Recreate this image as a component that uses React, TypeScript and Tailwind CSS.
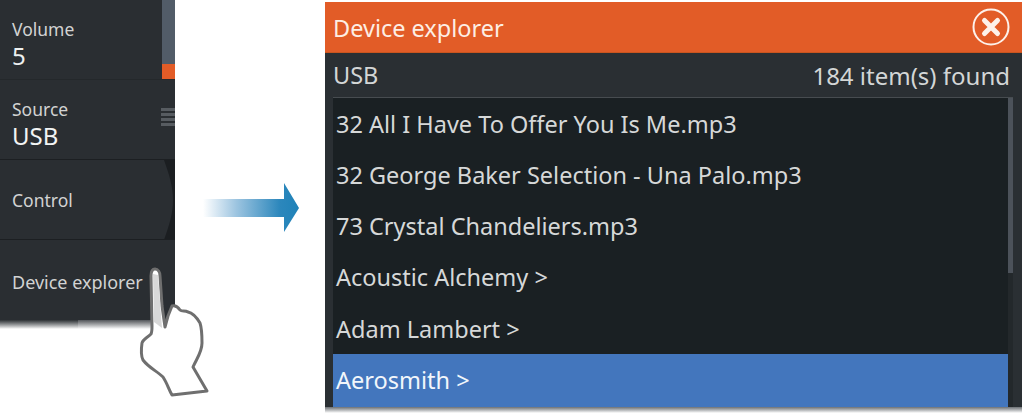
const font = { fontFamily: '"Noto Sans", sans-serif' };

const tracks = [
  { label: "32 All I Have To Offer You Is Me.mp3" },
  { label: "32 George Baker Selection - Una Palo.mp3" },
  { label: "73 Crystal Chandeliers.mp3" },
  { label: "Acoustic Alchemy >" },
  { label: "Adam Lambert >" },
];

function SideMenu() {
  return (
    <div className="relative w-[175px] h-[329px] shrink-0 bg-[#2a2e32]">
      <div className="flex h-[80px] border-b border-[#24282b]">
        <div className="flex-1 pl-3 pt-[18px]">
          <div className="text-[17.5px] leading-[22px] text-[#d2d3d3]">Volume</div>
          <div className="text-[24px] leading-[32px] text-[#eef0f0]">5</div>
        </div>
        <div className="w-[13px] flex flex-col">
          <div className="h-[64px] bg-[#525c68]" />
          <div className="h-[15px] bg-[#e25c27]" />
        </div>
      </div>
      <div className="flex h-[80px] border-b border-[#1c1f22]">
        <div className="flex-1 pl-3 pt-[18px]">
          <div className="text-[17.5px] leading-[22px] text-[#d2d3d3]">Source</div>
          <div className="text-[24px] leading-[32px] text-[#f2f4f4]">USB</div>
        </div>
        <div className="w-[14px] pt-[28px] flex flex-col gap-[2px]">
          <div className="h-[3px] bg-[#575c61]" />
          <div className="h-[3px] bg-[#575c61]" />
          <div className="h-[3px] bg-[#575c61]" />
          <div className="h-[3px] bg-[#575c61]" />
        </div>
      </div>
      <div className="relative flex h-[80px] items-center pl-3 pt-[2px] border-b border-[#1c1f22] overflow-hidden">
        <span className="text-[17.5px] text-[#d2d3d3]">Control</span>
        <svg className="absolute right-0 top-0" width="11" height="80" viewBox="0 0 11 80">
          <path d="M0 0 C5 14 9 26 9 40 C9 54 5 66 0 80 L11 80 L11 0 Z" fill="#1b1e21" />
        </svg>
      </div>
      <div className="flex h-[80px] items-center pl-3 pt-1">
        <span className="text-[18px] text-[#d2d3d3]">Device explorer</span>
      </div>
      <div className="absolute left-0 right-0 bottom-0 h-[9px] flex">
        <div className="w-[78px] bg-gradient-to-b from-[#2f3336] to-[#ffffff]" />
        <div className="flex-1 bg-gradient-to-b from-[#53565a] to-white" />
      </div>
    </div>
  );
}

function Arrow() {
  return (
    <svg className="shrink-0 mt-[183px] ml-[28px]" width="96" height="49" viewBox="0 0 96 49">
      <defs>
        <linearGradient id="arrowFade" x1="0" x2="1" y1="0" y2="0">
          <stop offset="0" stopColor="#ffffff" />
          <stop offset="0.35" stopColor="#9cc4e0" />
          <stop offset="0.8" stopColor="#2c87bc" />
          <stop offset="1" stopColor="#1f82b8" />
        </linearGradient>
      </defs>
      <path d="M0 16 H81 V0 L96 25 L81 49 V34 H0 Z" fill="url(#arrowFade)" />
    </svg>
  );
}

function HandCursor() {
  return (
    <svg className="absolute left-[135px] top-[266px]" width="75" height="135" viewBox="0 0 75 135">
      <path
        d="M20 3 C17 3 16 6 16 10 L17 60 C17 64 17 66 16 68 C12 72 8 73 7 77 C6 84 6 90 8 94 C14 102 22 105 28 111 C32 117 34 124 37 129 L72 125 L58 101 C62 92 67 86 67 77 C67 70 67 63 65 57 C62 52 58 47 53 46 C50 44 47 46 45 44 C43 41 40 39 37 40 L33 50 L30 61 L27 40 L25 10 C25 6 23 3 20 3 Z"
        fill="#ffffff"
        stroke="#6f6f6f"
        strokeWidth="3"
        strokeLinejoin="round"
      />
      <path d="M18 8 L19 56 L27 62 L23 9 Z" fill="#d8d8d8" />
    </svg>
  );
}

function DeviceExplorer() {
  return (
    <div className="ml-[26px] mt-[2px] w-[697px] h-[411px] shrink-0 bg-[#2a2f33] flex flex-col">
      <div className="flex h-[51px] items-center justify-between pl-2 pr-3 bg-[#e25c27] border-b border-[#c9551f]">
        <span className="pt-[3px] text-[23.5px] text-[#fdeee4]">Device explorer</span>
        <svg width="38" height="38" viewBox="0 0 38 38">
          <circle cx="19" cy="19" r="17.5" fill="none" stroke="#fdf1ea" strokeWidth="2" />
          <path d="M12.5 12.5 L25.5 25.5 M25.5 12.5 L12.5 25.5" stroke="#fdf1ea" strokeWidth="5" strokeLinecap="round" />
        </svg>
      </div>
      <div className="flex h-[44px] items-center justify-between pl-2 pr-3 pt-[2px]">
        <span className="text-[23.5px] text-[#d3d6d6]">USB</span>
        <span className="text-[24px] text-[#d3d6d6]">184 item(s) found</span>
      </div>
      <div className="flex flex-1 ml-2 mr-[9px] bg-[#1a2023] border-t border-[#474c50]">
        <div className="flex-1 flex flex-col">
          {tracks.map((t) => (
            <div key={t.label} className="flex h-[51.3px] items-center pl-[3px] pt-[1px] text-[23.5px] text-[#d6d8d8]">
              {t.label}
            </div>
          ))}
          <div className="flex flex-1 items-center pl-[3px] bg-[#4376bd] text-[23.5px] text-[#f2f6fb]">Aerosmith &gt;</div>
        </div>
        <div className="w-[5px] bg-[#23282b]">
          <div className="h-[175px] bg-[#4c525a]" />
        </div>
      </div>
      <div className="h-[6px] bg-gradient-to-b from-[#6d7175] to-white" />
    </div>
  );
}

export default function App() {
  return (
    <div style={font} className="relative flex w-[1023px] h-[417px] overflow-hidden bg-white">
      <SideMenu />
      <Arrow />
      <DeviceExplorer />
      <HandCursor />
    </div>
  );
}
